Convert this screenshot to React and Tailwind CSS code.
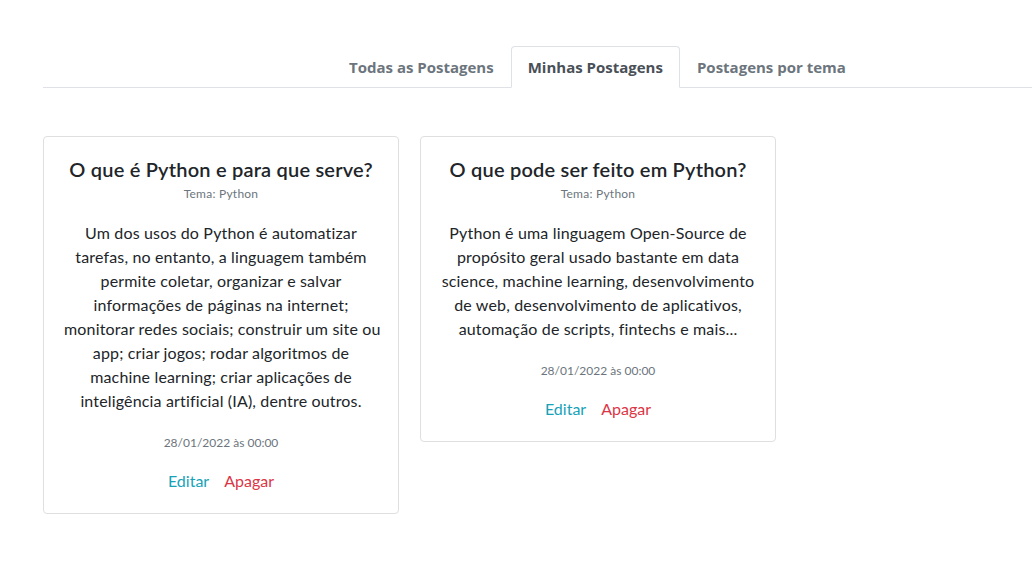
export default function App() {
  const posts = [
    {
      title: "O que é Python e para que serve?",
      lines: [
        "Um dos usos do Python é automatizar",
        "tarefas, no entanto, a linguagem também",
        "permite coletar, organizar e salvar",
        "informações de páginas na internet;",
        "monitorar redes sociais; construir um site ou",
        "app; criar jogos; rodar algoritmos de",
        "machine learning; criar aplicações de",
        "inteligência artificial (IA), dentre outros.",
      ],
    },
    {
      title: "O que pode ser feito em Python?",
      lines: [
        "Python é uma linguagem Open-Source de",
        "propósito geral usado bastante em data",
        "science, machine learning, desenvolvimento",
        "de web, desenvolvimento de aplicativos,",
        "automação de scripts, fintechs e mais...",
      ],
    },
  ];
  return (
    <div className="min-h-[569px] bg-white text-[#212529]" style={{ fontFamily: '"Open Sans", "Noto Sans", sans-serif' }}>
      <div className="pl-[43px] pt-[46px]">
        <div className="flex justify-start border-b border-[#dee2e6] pl-[289px]">
          {["Todas as Postagens", "Minhas Postagens", "Postagens por tema"].map((t, i) => (
            <div
              key={t}
              className={
                "-mb-px h-[42px] flex items-center px-4 text-[15px] font-bold rounded-t border " +
                (i === 1
                  ? "border-[#dee2e6] border-b-white bg-white text-[#495057]"
                  : "border-transparent text-[#6c757d]")
              }
            >
              {t}
            </div>
          ))}
        </div>
        <div className="flex items-start gap-[21px] mt-[48px]">
          {posts.map((p) => (
            <div
              key={p.title}
              className="w-[356px] border border-[#dfdfdf] rounded p-5 text-center"
              style={{ fontFamily: '"Lato", sans-serif' }}
            >
              <h5 className="text-[20px] font-semibold leading-6 tracking-[0.01em] text-[#212529]">{p.title}</h5>
              <div className="text-[12px] leading-[18px] text-[#6c757d] mt-[4px] tracking-[0.02em]">Tema: Python</div>
              <p className="mt-[18px] text-[16px] leading-6 text-[#212529] tracking-[0.01em]">
                {p.lines.map((l) => (
                  <span key={l} className="block whitespace-nowrap">
                    {l}
                  </span>
                ))}
              </p>
              <div className="mt-[21px] text-[12px] leading-[18px] text-[#6c757d]">28/01/2022 às 00:00</div>
              <div className="mt-[17px] flex justify-center gap-[15px] text-[16px] leading-6">
                <span className="text-[#17a2b8]">Editar</span>
                <span className="text-[#dc3545]">Apagar</span>
              </div>
            </div>
          ))}
        </div>
      </div>
    </div>
  );
}
